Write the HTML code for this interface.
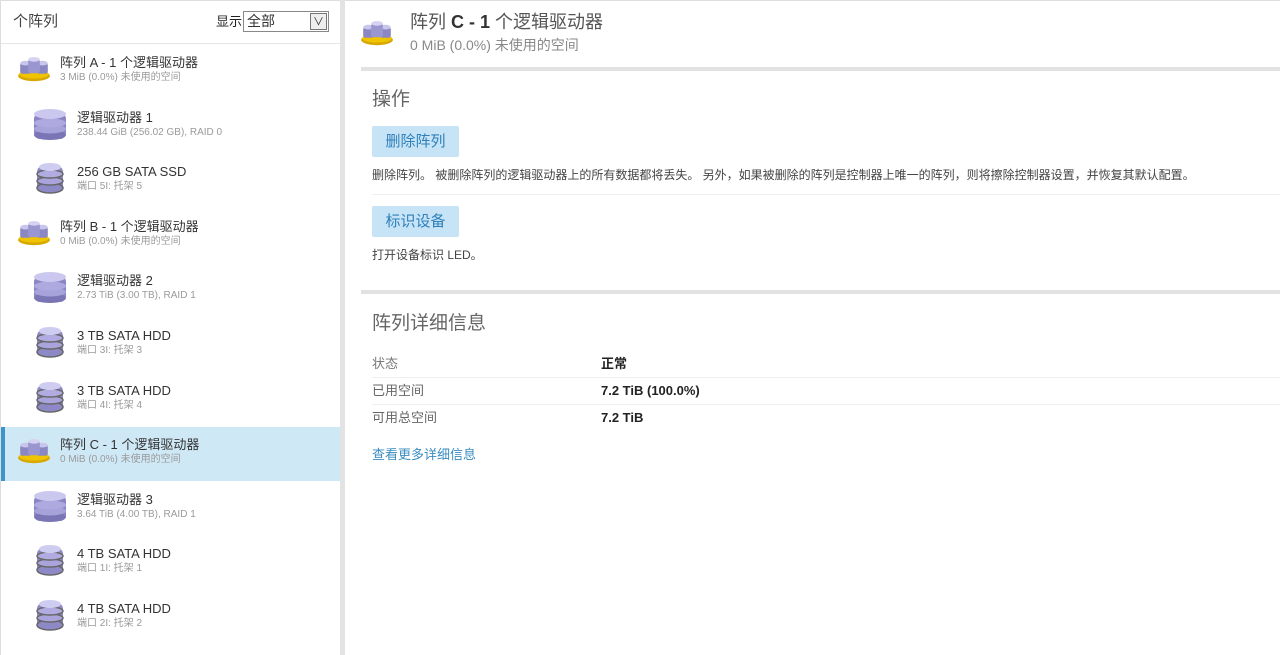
<!DOCTYPE html>
<html><head><meta charset="utf-8"><style>
*{margin:0;padding:0;box-sizing:border-box}
body{width:1280px;height:655px;overflow:hidden;background:#fff;font-family:"Liberation Sans","Noto Sans CJK SC",sans-serif;color:#333;position:relative}
.left{position:absolute;left:0;top:0;width:340px;height:655px;border-top:1px solid #ddd;border-left:1px solid #ddd}
.vbar{position:absolute;left:340px;top:0;width:5px;height:655px;background:#e3e3e3}
.hdr{position:absolute;left:12px;top:11px;font-size:15px;line-height:20px;color:#444}
.show{position:absolute;left:215px;top:12px;font-size:13px;line-height:18px;color:#222}
.sel{position:absolute;left:242px;top:10px;width:86px;height:21px;border:1px solid #888;font-size:14px;padding-left:3px;line-height:19px;background:#fff}
.sel i{position:absolute;right:1px;top:1px;width:17px;height:17px;border:1px solid #777;background:#eee;font-style:normal;text-align:center;font-size:11px;line-height:16px}
.hline{position:absolute;left:0;top:42px;width:340px;height:1px;background:#e6e6e6}
.row{position:absolute;left:1px;width:339px;height:54px}
.row.on{background:#cfe8f6;border-left:4px solid #3b95cc}
.row .t{position:absolute;top:10px;font-size:13px;line-height:16px;color:#333;white-space:nowrap}
.row .s{position:absolute;top:27px;font-size:10px;line-height:12px;color:#9a9a9a;white-space:nowrap}
.row svg{position:absolute}
.r{position:absolute;line-height:1.25}
</style></head><body>
<div class="left">
<div class="hdr">个阵列</div>
<div class="show">显示</div>
<div class="sel">全部<i>∨</i></div>
<div class="hline"></div>
</div>
<div class="vbar"></div>

<svg width="0" height="0" style="position:absolute">
<defs>
<g id="arr">
<ellipse cx="16" cy="18" rx="15" ry="5" fill="#d9a800"/><ellipse cx="16" cy="16.5" rx="14" ry="4" fill="#f0c400"/>
<rect x="3" y="6" width="10" height="10" rx="2" fill="#8b87c2"/><ellipse cx="8" cy="6" rx="5" ry="2.2" fill="#c9c6ec"/>
<rect x="19" y="6" width="10" height="10" rx="2" fill="#8b87c2"/><ellipse cx="24" cy="6" rx="5" ry="2.2" fill="#c9c6ec"/>
<rect x="10.5" y="2.5" width="11" height="13" rx="2" fill="#9a96d0"/><ellipse cx="16" cy="2.5" rx="5.5" ry="2.2" fill="#d5d2f2"/>
</g>
<g id="ld">
<rect x="1" y="4" width="32" height="26" rx="6" fill="#8a86c4"/>
<ellipse cx="17" cy="26" rx="16" ry="5" fill="#7a76b6"/>
<ellipse cx="17" cy="20" rx="16" ry="4.5" fill="#a6a2da"/>
<ellipse cx="17" cy="14" rx="16" ry="4.5" fill="#aeaae0"/>
<ellipse cx="17" cy="5" rx="16" ry="5" fill="#cbc8ef"/>
</g>
<g id="hd">
<rect x="4" y="4" width="26" height="26" rx="6" fill="#8d89c6"/>
<ellipse cx="17" cy="26" rx="13" ry="5" fill="#8d89c6" stroke="#666" stroke-width="1.5"/>
<ellipse cx="17" cy="19" rx="13" ry="4" fill="#a9a5dc" stroke="#666" stroke-width="1.5"/>
<ellipse cx="17" cy="12" rx="13" ry="4" fill="#b0ace2" stroke="#666" stroke-width="1.5"/>
<ellipse cx="17" cy="5" rx="11" ry="4" fill="#cfccf2"/>
</g>
</defs></svg>

<div class="row" style="top:45px"><svg width="34" height="27" viewBox="0 0 32 24" style="left:16px;top:11px"><use href="#arr"/></svg><div class="t" style="left:59px">阵列 A - 1 个逻辑驱动器</div><div class="s" style="left:59px">3 MiB (0.0%) 未使用的空间</div></div>
<div class="row" style="top:100px"><svg width="34" height="32" style="left:32px;top:9px"><use href="#ld"/></svg><div class="t" style="left:76px">逻辑驱动器 1</div><div class="s" style="left:76px">238.44 GiB (256.02 GB), RAID 0</div></div>
<div class="row" style="top:154px"><svg width="34" height="34" style="left:32px;top:8px"><use href="#hd"/></svg><div class="t" style="left:76px">256 GB SATA SSD</div><div class="s" style="left:76px">端口 5I: 托架 5</div></div>
<div class="row" style="top:209px"><svg width="34" height="27" viewBox="0 0 32 24" style="left:16px;top:11px"><use href="#arr"/></svg><div class="t" style="left:59px">阵列 B - 1 个逻辑驱动器</div><div class="s" style="left:59px">0 MiB (0.0%) 未使用的空间</div></div>
<div class="row" style="top:263px"><svg width="34" height="32" style="left:32px;top:9px"><use href="#ld"/></svg><div class="t" style="left:76px">逻辑驱动器 2</div><div class="s" style="left:76px">2.73 TiB (3.00 TB), RAID 1</div></div>
<div class="row" style="top:318px"><svg width="34" height="34" style="left:32px;top:8px"><use href="#hd"/></svg><div class="t" style="left:76px">3 TB SATA HDD</div><div class="s" style="left:76px">端口 3I: 托架 3</div></div>
<div class="row" style="top:373px"><svg width="34" height="34" style="left:32px;top:8px"><use href="#hd"/></svg><div class="t" style="left:76px">3 TB SATA HDD</div><div class="s" style="left:76px">端口 4I: 托架 4</div></div>
<div class="row on" style="top:427px"><svg width="34" height="27" viewBox="0 0 32 24" style="left:12px;top:11px"><use href="#arr"/></svg><div class="t" style="left:55px">阵列 C - 1 个逻辑驱动器</div><div class="s" style="left:55px">0 MiB (0.0%) 未使用的空间</div></div>
<div class="row" style="top:482px"><svg width="34" height="32" style="left:32px;top:9px"><use href="#ld"/></svg><div class="t" style="left:76px">逻辑驱动器 3</div><div class="s" style="left:76px">3.64 TiB (4.00 TB), RAID 1</div></div>
<div class="row" style="top:536px"><svg width="34" height="34" style="left:32px;top:8px"><use href="#hd"/></svg><div class="t" style="left:76px">4 TB SATA HDD</div><div class="s" style="left:76px">端口 1I: 托架 1</div></div>
<div class="row" style="top:591px"><svg width="34" height="34" style="left:32px;top:8px"><use href="#hd"/></svg><div class="t" style="left:76px">4 TB SATA HDD</div><div class="s" style="left:76px">端口 2I: 托架 2</div></div>

<div class="r" style="left:345px;top:0;width:935px;height:1px;background:#ddd"></div>
<svg class="r" width="34" height="27" style="left:360px;top:20px" viewBox="0 0 32 24"><use href="#arr"/></svg>
<div class="r" style="left:410px;top:11px;font-size:18px;color:#555">阵列 <b style="color:#333">C - 1</b> 个逻辑驱动器</div>
<div class="r" style="left:410px;top:37px;font-size:14px;color:#888">0 MiB (0.0%) 未使用的空间</div>
<div class="r" style="left:361px;top:67px;width:919px;height:4px;background:#e2e2e2"></div>
<div class="r" style="left:372px;top:88px;font-size:19px;color:#666">操作</div>
<div class="r" style="left:372px;top:126px;width:87px;height:31px;background:#c6e4f5;border-radius:2px;color:#2f80bb;font-size:15px;line-height:31px;text-align:center">删除阵列</div>
<div class="r" style="left:372px;top:168px;font-size:12px;color:#444;white-space:nowrap">删除阵列。 被删除阵列的逻辑驱动器上的所有数据都将丢失。 另外，如果被删除的阵列是控制器上唯一的阵列，则将擦除控制器设置，并恢复其默认配置。</div>
<div class="r" style="left:372px;top:194px;width:908px;height:1px;background:#eee"></div>
<div class="r" style="left:372px;top:206px;width:87px;height:31px;background:#c6e4f5;border-radius:2px;color:#2f80bb;font-size:15px;line-height:31px;text-align:center">标识设备</div>
<div class="r" style="left:372px;top:248px;font-size:12px;color:#444">打开设备标识 LED。</div>
<div class="r" style="left:361px;top:290px;width:919px;height:4px;background:#e2e2e2"></div>
<div class="r" style="left:372px;top:312px;font-size:19px;color:#666">阵列详细信息</div>
<div class="r" style="left:372px;top:356px;font-size:13px;line-height:16px;color:#777">状态</div>
<div class="r" style="left:601px;top:356px;font-size:13px;line-height:16px;color:#222;font-weight:bold">正常</div>
<div class="r" style="left:372px;top:377px;width:908px;height:1px;background:#eee"></div>
<div class="r" style="left:372px;top:383px;font-size:13px;line-height:16px;color:#666">已用空间</div>
<div class="r" style="left:601px;top:383px;font-size:13px;line-height:16px;color:#222;font-weight:bold">7.2 TiB (100.0%)</div>
<div class="r" style="left:372px;top:404px;width:908px;height:1px;background:#eee"></div>
<div class="r" style="left:372px;top:410px;font-size:13px;line-height:16px;color:#666">可用总空间</div>
<div class="r" style="left:601px;top:410px;font-size:13px;line-height:16px;color:#222;font-weight:bold">7.2 TiB</div>
<div class="r" style="left:372px;top:447px;font-size:13px;line-height:16px;color:#3a8cc0">查看更多详细信息</div>
</body></html>
